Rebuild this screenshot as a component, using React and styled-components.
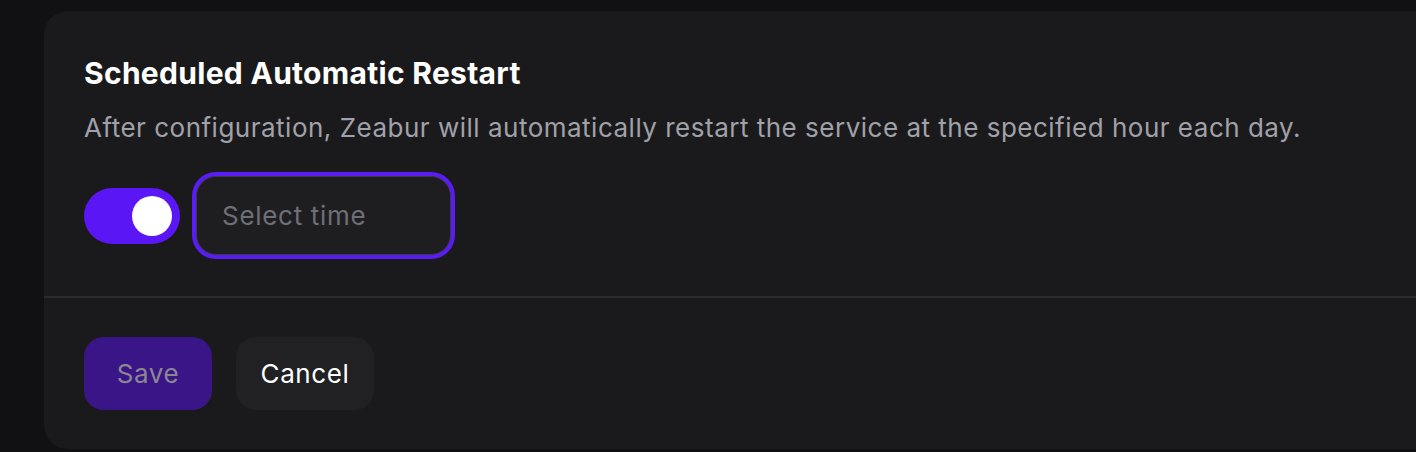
import React from 'react';
import styled, { createGlobalStyle } from 'styled-components';

const GlobalStyle = createGlobalStyle`
  html, body {
    margin: 0;
    padding: 0;
    background: #111113;
    overflow: hidden;
  }
  body {
    font-family: Inter, "Noto Sans", sans-serif;
  }
`;

const Page = styled.div`
  padding: 11px 0 0 44px;
  width: 1416px;
  height: 452px;
  box-sizing: border-box;
`;

const Card = styled.div`
  width: 1420px;
  height: 438px;
  background: #1a1a1c;
  border-radius: 24px;
  display: flex;
  flex-direction: column;
`;

const Body = styled.div`
  padding: 44px 40px 0;
  height: 287px;
  box-sizing: border-box;
  border-bottom: 2px solid #2b2b30;
`;

const Title = styled.h2`
  margin: 0;
  color: #ffffff;
  font-size: 30px;
  line-height: 36px;
  font-weight: 700;
  letter-spacing: 0.3px;
`;

const Description = styled.p`
  margin: 20px 0 0;
  color: #a1a1a9;
  font-size: 26px;
  line-height: 34px;
  letter-spacing: 0.5px;
  white-space: nowrap;
`;

const Row = styled.div`
  display: flex;
  align-items: center;
  gap: 16px;
  margin-top: 31px;
`;

const Toggle = styled.div`
  width: 96px;
  height: 56px;
  border-radius: 28px;
  background: ${p => (p.$on ? '#5b16f6' : '#3a3a3f')};
  display: flex;
  align-items: center;
  justify-content: ${p => (p.$on ? 'flex-end' : 'flex-start')};
  padding: 0 8px;
  box-sizing: border-box;
`;

const Knob = styled.span`
  width: 40px;
  height: 40px;
  border-radius: 50%;
  background: #ffffff;
`;

const TimeInput = styled.input`
  width: 255px;
  height: 79px;
  box-sizing: border-box;
  border-radius: 20px;
  border: 1.5px solid #3a3a40;
  box-shadow: 0 0 0 4px #5a1cf4;
  background: #1e1e21;
  padding: 0 0 0 25px;
  font-family: inherit;
  font-size: 26px;
  letter-spacing: 0.7px;
  color: #ffffff;
  outline: none;

  &::placeholder {
    color: #6f6f78;
  }
`;

const Footer = styled.div`
  display: flex;
  gap: 24px;
  padding: 39px 40px 0;
`;

const Button = styled.button`
  width: ${p => p.$width}px;
  height: 73px;
  padding: 0;
  border: none;
  border-radius: 20px;
  font-family: inherit;
  font-size: 26px;
  letter-spacing: 0.6px;
  background: ${p => (p.$primary ? '#3a1587' : '#212124')};
  color: ${p => (p.$primary ? '#8b8791' : '#ffffff')};
  cursor: pointer;
`;

export default function App() {
  return (
    <>
      <GlobalStyle />
      <Page>
        <Card>
          <Body>
            <Title>Scheduled Automatic Restart</Title>
            <Description>
              After configuration, Zeabur will automatically restart the service at the specified hour each day.
            </Description>
            <Row>
              <Toggle $on>
                <Knob />
              </Toggle>
              <TimeInput placeholder="Select time" />
            </Row>
          </Body>
          <Footer>
            <Button $primary $width={128}>Save</Button>
            <Button $width={138}>Cancel</Button>
          </Footer>
        </Card>
      </Page>
    </>
  );
}
